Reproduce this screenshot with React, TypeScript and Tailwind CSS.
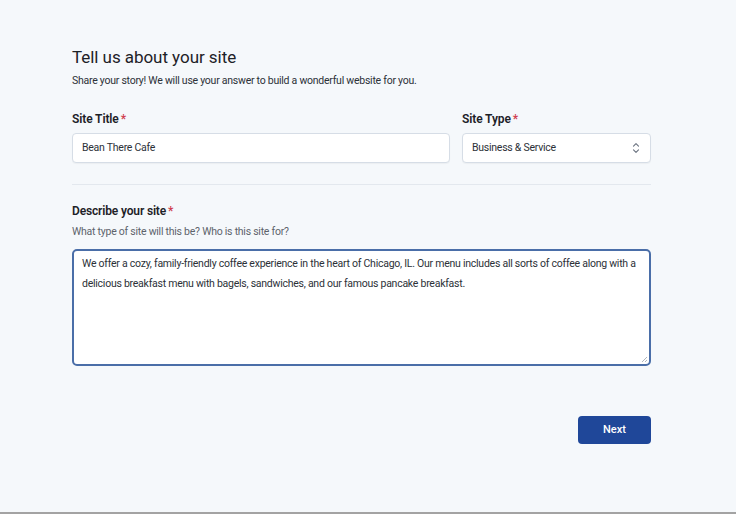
import React from "react";

export default function App() {
  return (
    <div className="w-[736px] h-[514px] bg-[#f5f8fb] flex flex-col" style={{ fontFamily: "Roboto, 'Noto Sans', sans-serif" }}>
      <div className="flex-1 pl-[72px] pr-[85px] pt-[46px] flex flex-col">
        <h1 className="text-[17px] leading-[22px] text-[#1d2127] font-normal tracking-[-0.05px]">Tell us about your site</h1>
        <p className="mt-[6px] text-[10.5px] leading-[14px] text-[#2c3138] tracking-[-0.25px]">Share your story! We will use your answer to build a wonderful website for you.</p>
        <div className="mt-[23px] flex gap-[12px]">
          <div className="flex-1 flex flex-col">
            <label className="text-[12px] leading-[16px] font-semibold text-[#1d2127] tracking-[-0.1px]">Site Title<span className="text-[#d0404f] ml-[2px]">*</span></label>
            <div className="mt-[6px] h-[30px] bg-white border border-[#d6dde6] rounded-[4px] flex items-center px-[9px] text-[10.5px] text-[#2c3138] tracking-[-0.25px] shadow-[0_1px_1px_rgba(0,0,0,0.04)]">Bean There Cafe</div>
          </div>
          <div className="w-[189px] flex flex-col">
            <label className="text-[12px] leading-[16px] font-semibold text-[#1d2127] tracking-[-0.1px]">Site Type<span className="text-[#d0404f] ml-[2px]">*</span></label>
            <div className="mt-[6px] h-[30px] bg-white border border-[#d6dde6] rounded-[4px] flex items-center justify-between pl-[9px] pr-[10px] text-[10.5px] text-[#2c3138] tracking-[-0.25px] shadow-[0_1px_1px_rgba(0,0,0,0.04)]">
              <span>Business &amp; Service</span>
              <svg width="8" height="12" viewBox="0 0 8 12" fill="none" stroke="#6b7380" strokeWidth="1.1" strokeLinecap="round" strokeLinejoin="round">
                <path d="M1.5 4.2 L4 1.7 L6.5 4.2" />
                <path d="M1.5 7.8 L4 10.3 L6.5 7.8" />
              </svg>
            </div>
          </div>
        </div>
        <div className="mt-[21px] h-px bg-[#e3e8ee]" />
        <label className="mt-[18px] text-[12px] leading-[16px] font-semibold text-[#1d2127] tracking-[-0.15px]">Describe your site<span className="text-[#d0404f] ml-[2px]">*</span></label>
        <p className="mt-[6px] text-[10.5px] leading-[14px] text-[#5d636b] tracking-[-0.25px]">What type of site will this be? Who is this site for?</p>
        <div className="mt-[10px] h-[117px] bg-white border-2 border-[#4a6ea8] rounded-[5px] px-[8px] pt-[3px] text-[10.5px] leading-[20px] text-[#2c3138] tracking-[-0.25px] relative">
          We offer a cozy, family-friendly coffee experience in the heart of Chicago, IL. Our menu includes all sorts of coffee along with a delicious breakfast menu with bagels, sandwiches, and our famous pancake breakfast.
          <svg className="absolute right-[1px] bottom-[1px]" width="7" height="7" viewBox="0 0 7 7" stroke="#9aa3ad" strokeWidth="0.8">
            <path d="M6 1 L1 6 M6 4 L4 6" />
          </svg>
        </div>
        <div className="mt-[50px] flex justify-end">
          <button className="w-[73px] h-[28px] rounded-[4px] bg-[#1f4799] text-white text-[11px] font-medium">Next</button>
        </div>
      </div>
      <div className="h-[2px] bg-[#a3a3a3]" />
    </div>
  );
}
